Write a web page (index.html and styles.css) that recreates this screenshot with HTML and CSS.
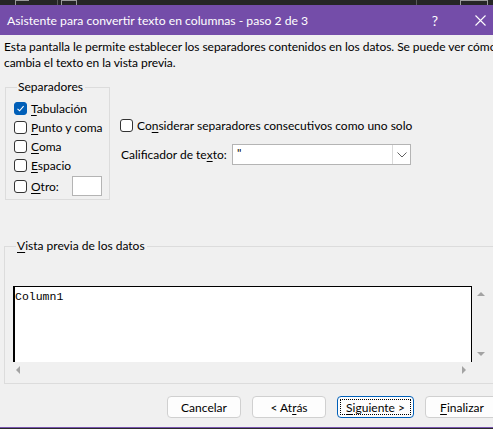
FILE: index.html
```html
<!DOCTYPE html>
<html lang="es">
<head>
    <meta charset="UTF-8">
    <meta name="viewport" content="width=device-width, initial-scale=1.0">
    <title>Asistente para convertir texto en columnas</title>
    <link rel="stylesheet" href="styles.css">
</head>
<body>
    <div class="backdrop-top">
        <span class="ribbon-box rb-1"></span>
        <span class="ribbon-line rl-1"></span>
        <span class="ribbon-box rb-2"></span>
        <span class="ribbon-line rl-2"></span>
        <span class="ribbon-box rb-3"></span>
    </div>

    <div class="dialog">
        <header class="titlebar">
            <span class="title">Asistente para convertir texto en columnas - paso 2 de 3</span>
            <span class="help">?</span>
            <span class="close">
                <svg width="11" height="11" viewBox="0 0 11 11"><path d="M0.5 0.5L10.5 10.5M10.5 0.5L0.5 10.5" stroke="#fff" stroke-width="1.1" fill="none"/></svg>
            </span>
        </header>

        <div class="dialog-body">
            <p class="intro">
                <span class="intro-line">Esta pantalla le permite establecer los separadores contenidos en los datos. Se puede ver cómo</span>
                <span class="intro-line">cambia el texto en la vista previa.</span>
            </p>

            <div class="options">
                <fieldset class="group separators">
                    <legend>Separadores</legend>
                    <label class="check">
                        <span class="box checked">
                            <svg width="9" height="9" viewBox="0 0 9 9"><path d="M1.5 4.8L3.6 6.8L7.6 2.2" stroke="#fff" stroke-width="1.1" fill="none"/></svg>
                        </span>
                        <span><u>T</u>abulación</span>
                    </label>
                    <label class="check"><span class="box"></span><span><u>P</u>unto y coma</span></label>
                    <label class="check"><span class="box"></span><span><u>C</u>oma</span></label>
                    <label class="check"><span class="box"></span><span><u>E</u>spacio</span></label>
                    <label class="check other">
                        <span class="box"></span>
                        <span><u>O</u>tro:</span>
                        <span class="textbox"></span>
                    </label>
                </fieldset>

                <div class="options-right">
                    <label class="check"><span class="box"></span><span>Co<u>n</u>siderar separadores consecutivos como uno solo</span></label>
                    <div class="qualifier">
                        <span class="qualifier-label">Calificador de te<u>x</u>to:</span>
                        <div class="combo">
                            <span class="combo-value">"</span>
                            <span class="combo-arrow">
                                <svg width="10" height="6" viewBox="0 0 10 6"><path d="M0.5 0.5L5 5L9.5 0.5" stroke="#606060" stroke-width="1" fill="none"/></svg>
                            </span>
                        </div>
                    </div>
                </div>
            </div>

            <fieldset class="group preview">
                <legend><u>V</u>ista previa de los datos</legend>
                <div class="preview-grid">
                    <div class="preview-box">Column1</div>
                    <div class="vscroll">
                        <span class="arrow arrow-up"></span>
                        <span class="arrow arrow-down"></span>
                    </div>
                    <div class="hscroll">
                        <span class="arrow arrow-left"></span>
                        <span class="arrow arrow-right"></span>
                    </div>
                </div>
            </fieldset>

            <div class="buttons">
                <button class="btn">Cancelar</button>
                <button class="btn">&lt; At<u>r</u>ás</button>
                <button class="btn btn-default"><span class="focus-ring"><u>S</u>iguiente &gt;</span></button>
                <button class="btn"><u>F</u>inalizar</button>
            </div>
        </div>
    </div>

    <div class="backdrop-bottom"></div>
</body>
</html>
```

FILE: styles.css
```css
html, body {
    margin: 0;
    padding: 0;
    width: 493px;
    height: 429px;
    overflow: hidden;
}

body {
    background-color: #f0f0f0;
    font-family: Lato, "Segoe UI", sans-serif;
    font-size: 12px;
    color: #000;
}

u {
    text-decoration-thickness: 1px;
    text-underline-offset: 2px;
}

/* excel window behind the dialog */
.backdrop-top {
    height: 5px;
    background-color: #262626;
    display: flex;
    align-items: flex-start;
    overflow: hidden;
}

.ribbon-box {
    height: 6px;
    border-top: 1px solid #9a9a9a;
    border-left: 1px solid #9a9a9a;
    border-right: 1px solid #9a9a9a;
    box-sizing: border-box;
}

.rb-1 { width: 14px; margin-left: 15px; border-right: none; }
.rl-1 { width: 1px; height: 5px; background: #5a5a5a; margin-left: 28px; }
.rb-2 { width: 16px; margin-left: 3px; }
.rl-2 { width: 1px; height: 5px; background: #5a5a5a; margin-left: 339px; }
.rb-3 { width: 28px; margin-left: 43px; }

.dialog {
    width: 510px;
}

.titlebar {
    height: 30px;
    background-color: #744da9;
    color: #fff;
    display: flex;
    align-items: center;
}

.title {
    padding: 1px 0 0 7px;
    font-size: 12.2px;
    white-space: nowrap;
    flex: 1;
}

.help {
    font-size: 14px;
    margin-right: 37px;
}

.close {
    display: flex;
    margin-right: 24px;
}

.dialog-body {
    padding: 0 0 0 4px;
}

.intro {
    margin: 4px 0 0 0;
    line-height: 16px;
    letter-spacing: -0.05px;
}

.intro-line {
    display: block;
    white-space: nowrap;
}

.options {
    display: flex;
    margin-top: 9px;
}

.group {
    margin: 0;
    border: 1px solid #dcdcdc;
    min-inline-size: 0;
}

.group legend {
    padding: 0 2px 0 1px;
    margin-left: 3px;
    line-height: 14px;
}

.separators {
    width: 105px;
    box-sizing: border-box;
    margin-left: 1px;
    padding: 5px 0 3px 8px;
}

.check {
    display: flex;
    align-items: center;
    height: 19px;
    white-space: nowrap;
}

.box {
    width: 13px;
    height: 13px;
    box-sizing: border-box;
    border: 1px solid #333;
    border-radius: 3px;
    background: #fff;
    margin-right: 4px;
    display: flex;
    align-items: center;
    justify-content: center;
    flex-shrink: 0;
}

.box.checked {
    background: #005fb8;
    border-color: #005fb8;
}

.check.other {
    height: 20px;
    margin-top: 1px;
}

.textbox {
    width: 30px;
    height: 20px;
    box-sizing: border-box;
    border: 1px solid #b4b4b4;
    background: #fff;
    margin-left: 13px;
}

.options-right {
    margin-left: 10px;
    padding-top: 36px;
}

.qualifier {
    display: flex;
    align-items: center;
    margin-top: 9px;
}

.qualifier-label {
    width: 111px;
    padding-left: 1px;
    white-space: nowrap;
}

.combo {
    width: 179px;
    height: 21px;
    box-sizing: border-box;
    border: 1px solid #b4b4b4;
    background: #fff;
    display: flex;
}

.combo-value {
    flex: 1;
    padding-left: 4px;
    line-height: 16px;
}

.combo-arrow {
    width: 17px;
    border-left: 1px solid #dadada;
    display: flex;
    align-items: center;
    justify-content: center;
}

.preview {
    margin-top: 39px;
    padding: 33px 0 6px 8px;
    border-right: none;
}

.preview-grid {
    display: grid;
    grid-template-columns: 459px 16px;
    grid-template-rows: 76px 15px;
}

.preview-box {
    background: #fff;
    border: 1px solid #000;
    border-left-width: 2px;
    border-bottom: none;
    font-family: "Liberation Mono", "Courier New", monospace;
    font-size: 11.5px;
    line-height: 16px;
    padding-top: 2px;
}

.vscroll {
    display: flex;
    flex-direction: column;
    justify-content: space-between;
    align-items: center;
    padding: 6px 0 6px 1px;
}

.hscroll {
    display: flex;
    justify-content: space-between;
    align-items: center;
    padding: 0 6px 0 3px;
}

.arrow {
    width: 0;
    height: 0;
    border: 4px solid transparent;
}

.arrow-up { border-bottom: 4px solid #a3a3a3; border-top: none; }
.arrow-down { border-top: 4px solid #a3a3a3; border-bottom: none; }
.arrow-left { border-right: 4px solid #a3a3a3; border-left: none; }
.arrow-right { border-left: 4px solid #a3a3a3; border-right: none; }

.buttons {
    display: flex;
    gap: 11px;
    margin: 12px 0 0 163px;
}

.btn {
    width: 74px;
    height: 22px;
    padding: 0;
    background: #fdfdfd;
    border: 1px solid #d0d0d0;
    border-radius: 4px;
    font-family: inherit;
    font-size: 12px;
    color: #000;
}

.btn-default {
    width: 77px;
    border-color: #005fb8;
    padding: 2px;
}

.focus-ring {
    display: flex;
    align-items: center;
    justify-content: center;
    height: 100%;
    box-sizing: border-box;
    border: 1px dotted #000;
}

.backdrop-bottom {
    position: absolute;
    left: 0;
    top: 427px;
    width: 493px;
    height: 2px;
    border-top: 1px solid #7a55b0;
    background: #2a2a2a;
    box-sizing: border-box;
}
```
